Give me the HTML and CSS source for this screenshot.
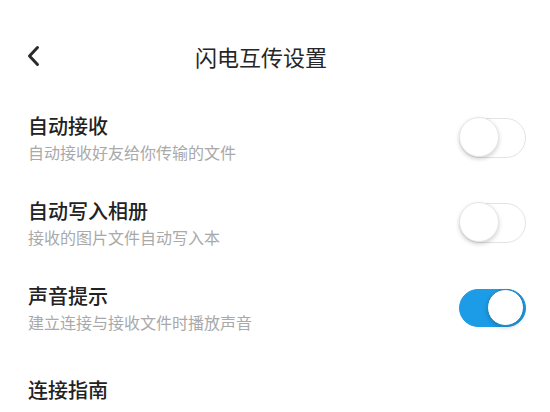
FILE: index.html
```html
<!DOCTYPE html>
<html lang="zh-CN">
<head>
    <meta charset="UTF-8">
    <meta name="viewport" content="width=device-width, initial-scale=1.0">
    <title>闪电互传设置</title>
    <link rel="stylesheet" href="styles.css">
</head>
<body>
    <div class="page">
        <header class="topbar">
            <div class="back">
                <svg width="20" height="28" viewBox="0 0 20 28">
                    <path d="M13.5 5.5 L5.5 14 L13.5 22.5" fill="none" stroke="#2a2a2a" stroke-width="3" stroke-linecap="round" stroke-linejoin="round"/>
                </svg>
            </div>
            <h1 class="title">闪电互传设置</h1>
            <div class="spacer"></div>
        </header>

        <div class="row">
            <div class="text">
                <div class="label">自动接收</div>
                <div class="desc">自动接收好友给你传输的文件</div>
            </div>
            <div class="switch"><span class="knob"></span></div>
        </div>

        <div class="row">
            <div class="text">
                <div class="label">自动写入相册</div>
                <div class="desc">接收的图片文件自动写入本</div>
            </div>
            <div class="switch"><span class="knob"></span></div>
        </div>

        <div class="row">
            <div class="text">
                <div class="label">声音提示</div>
                <div class="desc">建立连接与接收文件时播放声音</div>
            </div>
            <div class="switch on"><span class="knob"></span></div>
        </div>

        <div class="row last">
            <div class="text">
                <div class="label">连接指南</div>
            </div>
        </div>
    </div>
</body>
</html>
```

FILE: styles.css
```css
body {
    margin: 0;
    background: #fff;
    font-family: "Noto Sans CJK SC", "Noto Sans", sans-serif;
    overflow: hidden;
}
.page {
    width: 550px;
    height: 412px;
    overflow: hidden;
}
.topbar {
    display: flex;
    align-items: center;
    padding: 36px 24px 19px;
    height: 40px;
}
.back {
    width: 20px;
    display: flex;
    align-items: center;
}
.title {
    flex: 1;
    margin: 0;
    text-align: center;
    font-size: 22px;
    font-weight: 400;
    line-height: 40px;
    color: #262626;
}
.spacer {
    width: 48px;
}
.row {
    display: flex;
    align-items: center;
    justify-content: space-between;
    height: 85px;
    padding: 0 24px 0 28px;
}
.row.last {
    height: 80px;
}
.label {
    font-size: 20px;
    font-weight: 500;
    line-height: 24px;
    color: #222;
}
.desc {
    margin-top: 4px;
    font-size: 16px;
    line-height: 20px;
    color: #a9a9a9;
}
.switch {
    position: relative;
    box-sizing: border-box;
    width: 67px;
    height: 40px;
    border: 1.5px solid #e3e3e3;
    border-radius: 20px;
    background: #fff;
}
.knob {
    position: absolute;
    top: -1.5px;
    left: -1.5px;
    width: 38px;
    height: 38px;
    border-radius: 50%;
    background: #fff;
    border: 1px solid #e6e6e6;
    box-shadow: 0 2px 4px rgba(0, 0, 0, 0.18);
}
.switch.on {
    background: #1c9be6;
    border-color: #1c9be6;
    height: 38px;
}
.switch.on .knob {
    left: auto;
    right: 1px;
    top: -0.5px;
    width: 35px;
    height: 35px;
    border: 1.5px solid #1a7fb8;
}
```
